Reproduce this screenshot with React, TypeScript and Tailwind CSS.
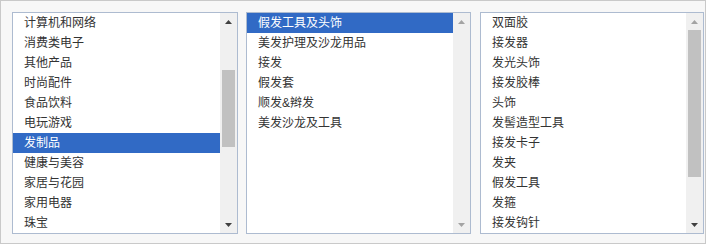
const col1 = [
  "计算机和网络",
  "消费类电子",
  "其他产品",
  "时尚配件",
  "食品饮料",
  "电玩游戏",
  "发制品",
  "健康与美容",
  "家居与花园",
  "家用电器",
  "珠宝",
];

const col2 = ["假发工具及头饰", "美发护理及沙龙用品", "接发", "假发套", "顺发&辫发", "美发沙龙及工具"];

const col3 = [
  "双面胶",
  "接发器",
  "发光头饰",
  "接发胶棒",
  "头饰",
  "发髻造型工具",
  "接发卡子",
  "发夹",
  "假发工具",
  "发箍",
  "接发钩针",
];

function Arrow({ up, dim }: { up?: boolean; dim?: boolean }) {
  return (
    <div className="h-[17px] flex items-center justify-center">
      <svg width="7" height="4" viewBox="0 0 7 4">
        <path
          d={up ? "M3.5 0 L7 4 L0 4 Z" : "M0 0 L7 0 L3.5 4 Z"}
          fill={dim ? "#a3a3a3" : "#404040"}
        />
      </svg>
    </div>
  );
}

function ListBox({
  items,
  selected,
  width,
  thumb,
  upDim,
  downDim,
}: {
  items: string[];
  selected: number;
  width: number;
  thumb?: [number, number];
  upDim?: boolean;
  downDim?: boolean;
}) {
  return (
    <div
      className="h-[222px] border border-[#adbbd0] bg-white flex shrink-0"
      style={{ width }}
    >
      <ul className="flex-1 overflow-hidden">
        {items.map((t, i) => (
          <li
            key={t}
            className={
              "h-[20px] leading-[20px] pl-[11px] whitespace-nowrap " +
              (i === selected ? "bg-[#316ac5] text-white" : "text-[#333333]")
            }
          >
            {t}
          </li>
        ))}
      </ul>
      <div className="w-[17px] bg-[#f0f0f0] flex flex-col">
        <Arrow up dim={upDim} />
        <div className="flex-1 relative">
          {thumb && (
            <div
              className="absolute left-[2px] right-[2px] bg-[#c1c1c1]"
              style={{ top: thumb[0], height: thumb[1] }}
            />
          )}
        </div>
        <Arrow dim={downDim} />
      </div>
    </div>
  );
}

export default function App() {
  return (
    <div
      className="w-[706px] h-[244px] border border-[#c9c9c9] bg-[#f7f7f7] pt-[11px] pl-[11px] flex text-[12px]"
      style={{ fontFamily: '"Liberation Sans", "Noto Sans CJK SC", sans-serif' }}
    >
      <ListBox items={col1} selected={6} width={226} thumb={[40, 77]} />
      <div className="w-[8px] shrink-0" />
      <ListBox items={col2} selected={0} width={225} upDim downDim />
      <div className="w-[9px] shrink-0" />
      <ListBox items={col3} selected={-1} width={224} thumb={[0, 147]} upDim />
    </div>
  );
}
